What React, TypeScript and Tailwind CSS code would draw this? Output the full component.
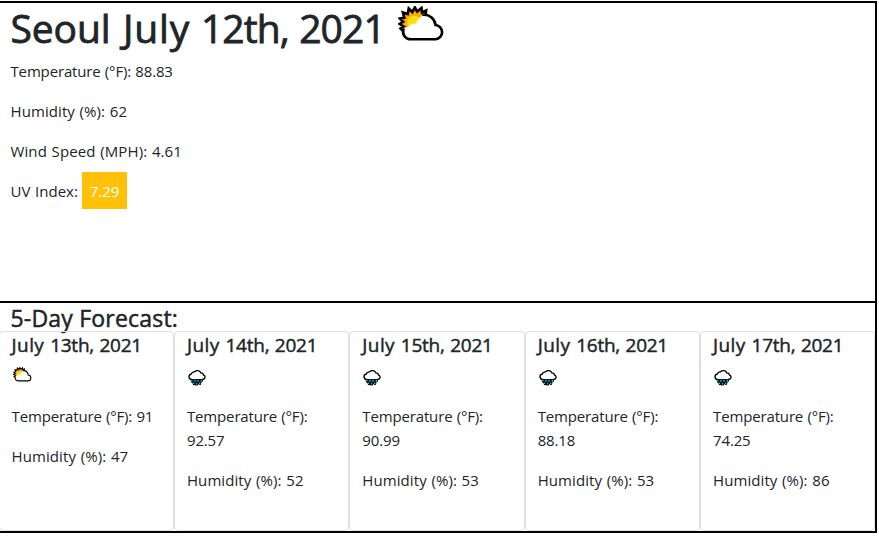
type Day = { day: string; icon: 'sun' | 'rain'; temp: string; humidity: string };

const days: Day[] = [
  { day: '13th,', icon: 'sun', temp: '91', humidity: '47' },
  { day: '14th,', icon: 'rain', temp: '92.57', humidity: '52' },
  { day: '15th,', icon: 'rain', temp: '90.99', humidity: '53' },
  { day: '16th,', icon: 'rain', temp: '88.18', humidity: '53' },
  { day: '17th,', icon: 'rain', temp: '74.25', humidity: '86' },
];

function PartlyCloudy({ className }: { className: string }) {
  return (
    <svg viewBox="0 0 46 36" preserveAspectRatio="none" className={className}>
      <path
        d="M5 25 L2.500 22.500 L5.500 20.500 L1.500 18 L5 15.800 L1.800 12.500 L6.200 11.800 L4.800 6.500 L9.500 8 L10.500 2.500 L14 6 L16.500 1.500 L18.800 5.500 L23 2 L23.500 6.500 L27.500 4.500 L27 9 L30 12 L18 24 Z"
        fill="#ffa900"
      />
      <path d="M9.500 20 A7 7 0 0 1 22 13.500 L16 24 Z" fill="#ffdd10" />
      <path
        d="M5 25 L2.500 22.500 L5.500 20.500 L1.500 18 L5 15.800 L1.800 12.500 L6.200 11.800 L4.800 6.500 L9.500 8 L10.500 2.500 L14 6 L16.500 1.500 L18.800 5.500 L23 2 L23.500 6.500 L27.500 4.500 L27 9"
        fill="none"
        stroke="#000"
        strokeWidth="2.6"
      />
      <path
        d="M12.500 33.300 H36.500 A7.300 7.300 0 0 0 36.500 19 A11.500 11.500 0 0 0 25.500 9 C21 11 18.500 14 18 17.500 C14.500 17 12 18.500 10 21 C8 20.800 6 22 5.200 24 C4 29 7.500 33.300 12.500 33.300 Z"
        fill="#fff"
      />
      <path
        d="M25 8.800 C31 8.500 36 12.800 36.800 19 A7.200 7.200 0 0 1 36.800 33.300 H12.500 C7.500 33.300 4 29 5.300 23.500"
        fill="none"
        stroke="#000"
        strokeWidth="2.6"
        strokeLinecap="round"
      />
    </svg>
  );
}

function Rain({ className }: { className: string }) {
  return (
    <svg viewBox="0 0 18 17" className={className}>
      <path
        d="M3.800 10 C0 9.800 .3 5 3.300 4.500 C4 1.800 6.200 2.500 6.600 2.200 C8.500 .3 12 .8 12.700 3.300 C15 3.200 15.300 4.800 15.300 5.300 C18 6.300 17.500 10 14 10"
        fill="#fff"
        stroke="#000"
        strokeWidth="1.300"
      />
      <path d="M2.500 9.500 H15.500 L14.500 12.500 L13.500 12.800 L13 15 L12 15.800 L10.500 14.500 L9.500 16 H7.500 L6.500 15.500 L5 15.500 L4.500 13.500 L3 12.800 Z" fill="#000" />
      <path
        d="M3.800 10.300 V12 M7.300 10.300 L6.600 12.300 M10.300 10.300 L9.600 12.300 M13.700 10.300 L13 12.300 M5.500 13 V14.500 M8.800 13.500 L8.200 15 M12 13 L11.400 14.600"
        stroke="#16b4df"
        strokeWidth="1.400"
        fill="none"
      />
    </svg>
  );
}

export default function App() {
  return (
    <div className="h-[536px] w-[879px] overflow-hidden bg-white pt-px font-['Open_Sans','Noto_Sans',sans-serif] text-[15px] leading-6 text-[#212529]">
      <main className="-ml-0.5 h-[532px] w-[879px] border-2 border-black">
        <section className="h-[300px] border-b-2 border-black pl-[10.5px]">
          <h1 className="flex h-12 items-start text-[39px] leading-[49px] font-medium [-webkit-text-stroke:0.8px_#212529]">
            <span className="w-[387.5px] whitespace-nowrap">
              <span className="tracking-[-0.1px] [word-spacing:2.5px]">Seoul </span>
              <span className="tracking-[0.8px]">July </span>
              <span className="tracking-[-0.9px] [word-spacing:1px]">12th, 2021</span>
            </span>
            <PartlyCloudy className="mt-[3px] h-9 w-[47px]" />
          </h1>
          <p className="mt-2 mb-4 tracking-[-0.15px] [word-spacing:0.5px]">Temperature (°F): 88.83</p>
          <p className="mb-4 tracking-[0.08px] [word-spacing:0.7px]">Humidity (%): 62</p>
          <p className="mb-4 tracking-[0.1px] [word-spacing:0.7px]">Wind Speed (MPH): 4.61</p>
          <p className="flex items-center">
            <span className="w-[71.5px] tracking-[0.05px] whitespace-nowrap [word-spacing:0.5px]">UV Index:</span>
            <span className="-mt-[9px] -mb-2 flex h-[37px] w-[45px] items-center justify-center bg-[#ffc107] pt-px text-white">
              7.29
            </span>
          </p>
        </section>
        <section>
          <h2 className="h-7 pl-[10.5px] text-[23px] leading-[31px] font-medium tracking-[0.2px] [-webkit-text-stroke:0.5px_#212529]">
            5-Day Forecast:
          </h2>
          <div className="-ml-[1.4px] grid h-[200px] w-[876.8px] grid-cols-5">
            {days.map((d) => (
              <article key={d.day} className="rounded border border-[#dfdfdf] pl-3">
                <h3 className="h-8 text-[19px] leading-[27px] font-medium [-webkit-text-stroke:0.45px_#212529]">
                  <span className="tracking-[0.4px] [word-spacing:0.5px]">July </span>
                  <span className="tracking-[-0.25px] [word-spacing:0.8px]">{d.day} 2021</span>
                </h3>
                <div className="mb-4 h-6">
                  {d.icon === 'sun' ? (
                    <PartlyCloudy className="ml-px h-[15px] w-[19px] translate-y-[3px]" />
                  ) : (
                    <Rain className="ml-px h-[17px] w-[18px] translate-y-[5.5px]" />
                  )}
                </div>
                <p className="mb-4 w-[150px] tracking-[-0.15px] [word-spacing:0.5px]">Temperature (°F): {d.temp}</p>
                <p className="tracking-[0.08px] [word-spacing:0.7px]">Humidity (%): {d.humidity}</p>
              </article>
            ))}
          </div>
        </section>
      </main>
    </div>
  );
}
